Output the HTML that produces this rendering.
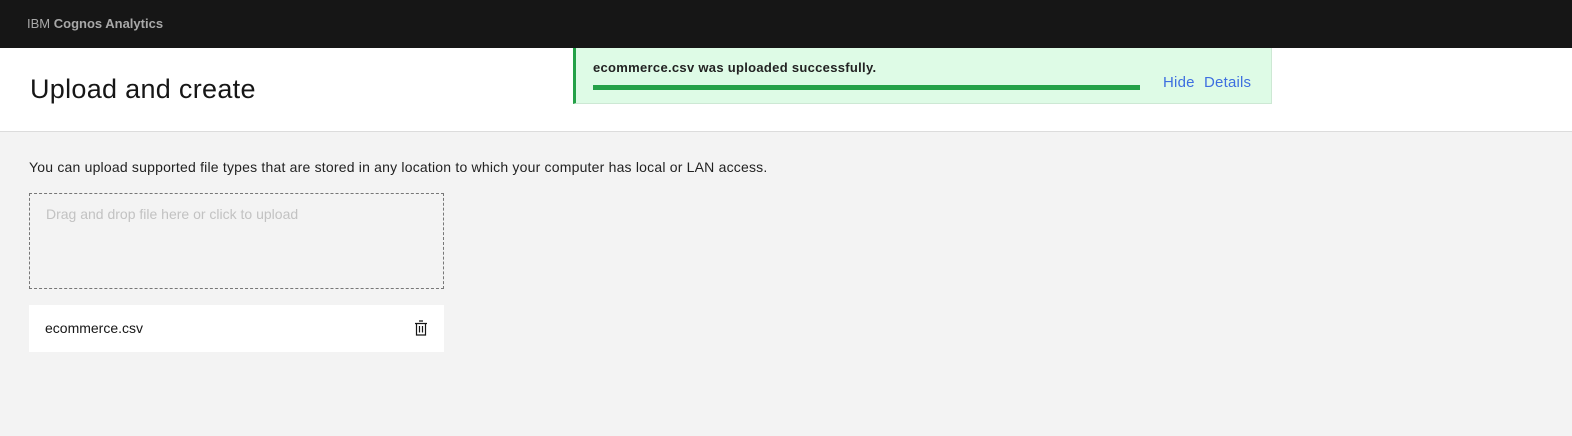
<!DOCTYPE html>
<html><head><style>
*{margin:0;padding:0;box-sizing:border-box}
body{width:1572px;height:436px;background:#f3f3f3;font-family:"Liberation Sans",sans-serif;position:relative;overflow:hidden;color:#161616}
.hdr{position:absolute;left:0;top:0;width:1572px;height:48px;background:#161616}
.hdr span{position:absolute;left:27px;top:16px;font-size:13px;color:#a8a8a8}
.band{position:absolute;left:0;top:48px;width:1572px;height:84px;background:#fff;border-bottom:1px solid #dcdcdc}
h1{position:absolute;left:30px;top:74px;font-size:27px;font-weight:normal;color:#161616;letter-spacing:0.3px}
.toast{position:absolute;left:573px;top:48px;width:699px;height:56px;background:#defbe6;border-left:3px solid #24a148;border-bottom:1px solid #cde8d4;border-right:1px solid #cde8d4}
.toast b{position:absolute;left:17px;top:12px;font-size:13px;color:#222;letter-spacing:0.3px}
.bar{position:absolute;left:17px;top:37px;width:547px;height:5px;background:#24a148}
.lnk{position:absolute;top:26px;font-size:15px;color:#3e6fe0;letter-spacing:0.2px}
p.d{position:absolute;left:29px;top:159px;font-size:14px;color:#222;letter-spacing:0.2px}
.dz{position:absolute;left:29px;top:193px;width:415px;height:96px;border:1px dashed #777}
.dz span{position:absolute;left:16px;top:12px;font-size:14px;color:#c2c2c2}
.file{position:absolute;left:29px;top:305px;width:415px;height:47px;background:#fff}
.file span{position:absolute;left:16px;top:15px;font-size:14px;color:#161616}
</style></head><body>
<div class="hdr"><span>IBM <b>Cognos Analytics</b></span></div>
<div class="band"></div>
<h1>Upload and create</h1>
<div class="toast"><b>ecommerce.csv was uploaded successfully.</b><div class="bar"></div>
<span class="lnk" style="left:587px">Hide</span><span class="lnk" style="left:628px">Details</span></div>
<p class="d">You can upload supported file types that are stored in any location to which your computer has local or LAN access.</p>
<div class="dz"><span>Drag and drop file here or click to upload</span></div>
<div class="file"><span>ecommerce.csv</span>
<svg style="position:absolute;left:385px;top:15px" width="14" height="16" viewBox="0 0 14 16" fill="none" stroke="#161616" stroke-width="1.2"><path d="M1 3.5h12M5 1h4M2.5 3.5V15h9V3.5M5.5 6v6.5M8.5 6v6.5"/></svg>
</div>
</body></html>
